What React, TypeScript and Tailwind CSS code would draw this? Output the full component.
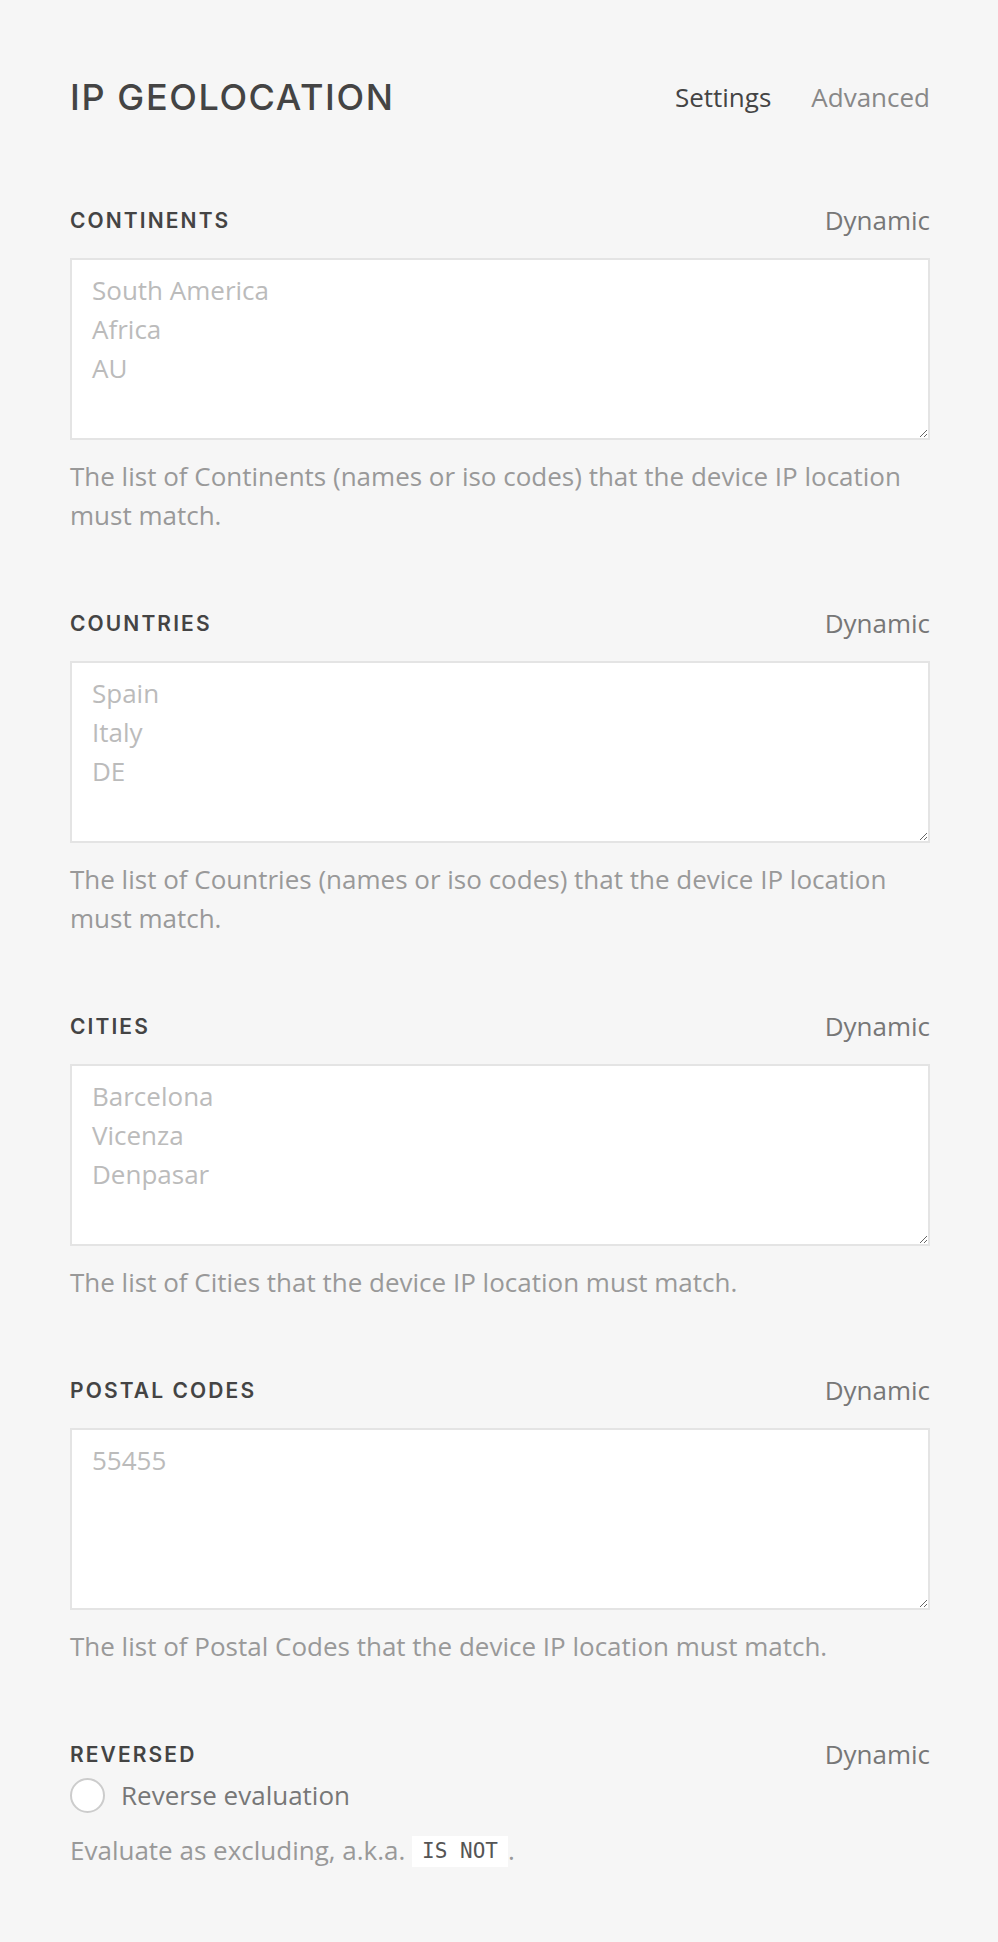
import React from 'react';

interface FieldProps {
  label: string;
  placeholder: string;
  help: string;
}

const LabelRow: React.FC<{ label: string }> = ({ label }) => (
  <div className="flex items-center justify-between h-[39px]">
    <span className="font-['Inter',sans-serif] text-[21px] font-semibold tracking-[0.1em] text-[#444444]">
      {label}
    </span>
    <span className="font-['Open_Sans',sans-serif] text-[26px] leading-[39px] text-[#777777]">Dynamic</span>
  </div>
);

const Field: React.FC<FieldProps> = ({ label, placeholder, help }) => (
  <div>
    <LabelRow label={label} />
    <textarea
      rows={4}
      placeholder={placeholder}
      className="mt-[18px] block w-full h-[182px] bg-white border-2 border-[#e4e4e4] px-[20px] py-[11px] font-['Open_Sans',sans-serif] text-[26px] leading-[39px] text-[#444] placeholder:text-[#bbbbbb] outline-none"
    />
    <p className="mt-[17px] font-['Open_Sans',sans-serif] text-[26px] leading-[39px] text-[#999999]">
      {help}
    </p>
  </div>
);

const fields: FieldProps[] = [
  {
    label: 'CONTINENTS',
    placeholder: 'South America\nAfrica\nAU',
    help: 'The list of Continents (names or iso codes) that the device IP location must match.',
  },
  {
    label: 'COUNTRIES',
    placeholder: 'Spain\nItaly\nDE',
    help: 'The list of Countries (names or iso codes) that the device IP location must match.',
  },
  {
    label: 'CITIES',
    placeholder: 'Barcelona\nVicenza\nDenpasar',
    help: 'The list of Cities that the device IP location must match.',
  },
  {
    label: 'POSTAL CODES',
    placeholder: '55455',
    help: 'The list of Postal Codes that the device IP location must match.',
  },
];

export default function App() {
  return (
    <div className="min-h-[1942px] bg-[#f6f6f6] pl-[70px] pr-[68px] pt-[75px] pb-[80px]">
      <header className="flex items-center justify-between h-[45px]">
        <h1 className="font-['Inter',sans-serif] text-[36px] leading-[45px] font-medium tracking-[0.045em] text-[#444444]">
          IP GEOLOCATION
        </h1>
        <nav className="flex items-center gap-[40px] font-['Open_Sans',sans-serif] text-[26px] leading-[39px]">
          <span className="text-[#444444]">Settings</span>
          <span className="text-[#888888]">Advanced</span>
        </nav>
      </header>

      <div className="mt-[81px] flex flex-col gap-[69px]">
        {fields.map((f) => (
          <Field key={f.label} {...f} />
        ))}

        <div>
          <LabelRow label="REVERSED" />
          <label className="mt-[2px] flex items-center gap-[16px] h-[39px]">
            <span className="w-[35px] h-[35px] rounded-full bg-white border-2 border-[#cccccc]" />
            <span className="font-['Open_Sans',sans-serif] text-[26px] leading-[39px] text-[#777777]">
              Reverse evaluation
            </span>
          </label>
          <p className="mt-[16px] font-['Open_Sans',sans-serif] text-[26px] leading-[39px] text-[#999999]">
            Evaluate as excluding, a.k.a.{' '}
            <code className="inline-block bg-white px-[10px] font-['DejaVu_Sans_Mono',monospace] text-[21px] leading-[31px] text-[#555555] align-[2px]">
              IS NOT
            </code>
            .
          </p>
        </div>
      </div>
    </div>
  );
}
